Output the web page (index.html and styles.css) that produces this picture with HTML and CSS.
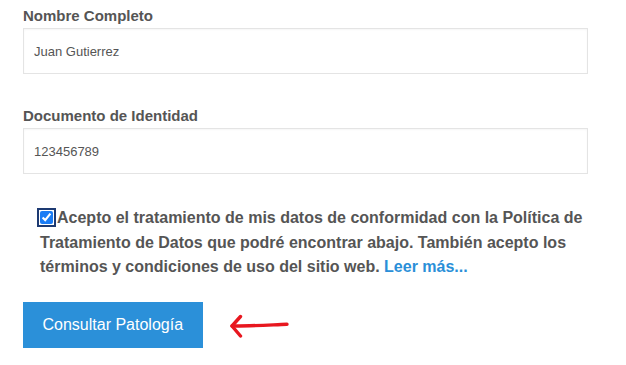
FILE: index.html
```html
<!DOCTYPE html>
<html lang="es">
<head>
    <meta charset="UTF-8">
    <meta name="viewport" content="width=device-width, initial-scale=1.0">
    <title>Consultar Patología</title>
    <link rel="stylesheet" href="styles.css">
</head>
<body>
    <form class="form" onsubmit="return false;">
        <div class="form-group">
            <label for="nombre">Nombre Completo</label>
            <input type="text" id="nombre" value="Juan Gutierrez">
        </div>
        <div class="form-group">
            <label for="documento">Documento de Identidad</label>
            <input type="text" id="documento" value="123456789">
        </div>

        <p class="consent">
            <input type="checkbox" id="acepto" checked>Acepto el tratamiento de mis datos de conformidad con la Política de Tratamiento de Datos que podré encontrar abajo. También acepto los términos y condiciones de uso del sitio web. <a href="#">Leer más...</a>
        </p>

        <div class="actions">
            <button type="submit">Consultar Patología</button>
            <!-- hand drawn arrow -->
            <svg class="arrow" width="62" height="24" viewBox="0 0 62 24">
                <path d="M3 12 C20 12.2 40 11 58 10.3" fill="none" stroke="#e8171f" stroke-width="3.4" stroke-linecap="round"/>
                <path d="M11.5 2.5 L3 12 L11.5 22" fill="none" stroke="#e8171f" stroke-width="3.4" stroke-linecap="round" stroke-linejoin="round"/>
            </svg>
        </div>
    </form>
</body>
</html>
```

FILE: styles.css
```css
body {
    font-family: "Liberation Sans", Arial, sans-serif;
    margin: 0;
    padding: 0;
    background-color: #fff;
    color: #555;
}
.form {
    width: 565px;
    margin-left: 23px;
    padding-top: 6px;
}
.form-group {
    margin-bottom: 32px;
}
.form-group label {
    display: block;
    font-size: 15px;
    font-weight: bold;
    line-height: 19px;
    margin-bottom: 3px;
}
.form-group input {
    display: block;
    width: 100%;
    height: 46px;
    box-sizing: border-box;
    padding: 0 10px;
    border: 1px solid #e4e4e4;
    box-shadow: inset 0 1px 2px rgba(0,0,0,0.04);
    font-family: inherit;
    font-size: 13px;
    color: #555;
    outline: none;
}
.consent {
    margin: 0 0 0 17px;
    font-size: 16px;
    font-weight: bold;
    line-height: 24.5px;
}
.consent input {
    width: 13px;
    height: 13px;
    margin: 0 4px 0 0;
    vertical-align: -1px;
    accent-color: #1a7cf5;
    outline: 2px solid #1d3a72;
    outline-offset: 1px;
}
.consent a {
    color: #2a8fd8;
    text-decoration: none;
}
.actions {
    display: flex;
    align-items: center;
    margin-top: 22px;
}
button {
    height: 46px;
    padding: 0 19.5px;
    background-color: #2b90d9;
    color: #fff;
    border: none;
    font-family: inherit;
    font-size: 16px;
    cursor: pointer;
}
.arrow {
    margin-left: 26px;
    margin-top: 3px;
}
```
